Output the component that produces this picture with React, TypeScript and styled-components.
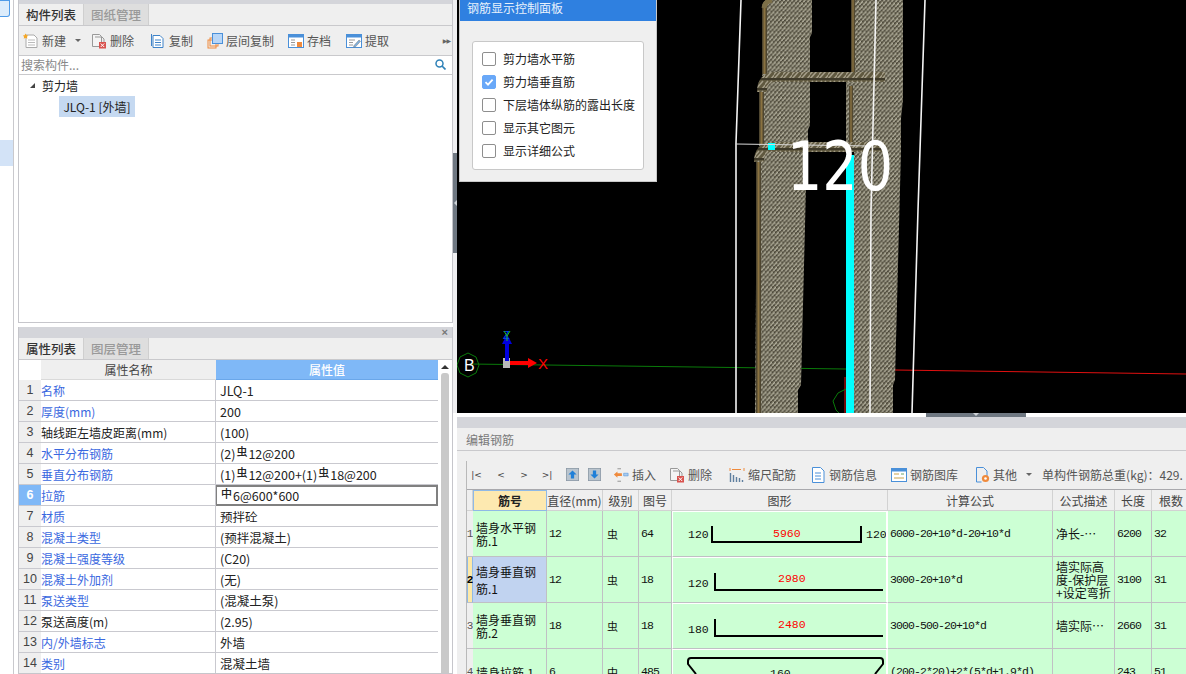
import React from "react";
import styled, { createGlobalStyle } from "styled-components";

const CJK = `"Noto Sans CJK SC", "Liberation Sans", sans-serif`;
const GRID_LATIN = `"Liberation Mono", "Noto Sans CJK SC", monospace`;

const Global = createGlobalStyle`
  html, body { margin: 0; padding: 0; background: #fff; }
  #root { width: 1186px; height: 674px; overflow: hidden; }
  * { box-sizing: border-box; }
`;

const Page = styled.div`
  width: 1186px; height: 674px; display: flex; overflow: hidden;
  font-family: ${CJK}; font-size: 12px; color: #222; background: #fff;
`;
const Rail = styled.div`
  width: 14px; flex: none; border-right: 1px solid #c9c9cd; display: flex; flex-direction: column;
`;
const RailIcon = styled.div`
  width: 10px; height: 17px; border: 1px solid #4f9be8; border-left: 0; border-radius: 0 0 3px 0; background: #dcecfb; flex: none;
`;
const RailSelected = styled.div`
  height: 26px; margin-top: 123px; background: #d3e3f7;
`;
const LeftColumn = styled.div`
  width: 435px; margin-left: 4px; flex: none; display: flex; flex-direction: column; gap: 4px;
`;
const Panel = styled.section<{ $h: number }>`
  height: ${p => p.$h}px; flex: none; display: flex; flex-direction: column; overflow: hidden;
  border: 1px solid #c6c6cb; border-top: 0; background: #fff;
`;
const TitleBar = styled.div<{ $h: number }>`
  height: ${p => p.$h}px; flex: none; background: #d4d5da; display: flex; justify-content: flex-end; align-items: center;
  padding-right: 4px; color: #777; font-size: 11px; line-height: 1; font-family: "Liberation Sans", sans-serif; font-weight: 700;
`;
const Tabs = styled.div`
  height: 22px; flex: none; display: flex; background: #efefef; border-bottom: 1px solid #c9c9cc;
`;
const Tab = styled.div<{ $on?: boolean }>`
  width: 65px; display: flex; align-items: center; justify-content: center; font-size: 12.5px; font-weight: 500;
  color: ${p => (p.$on ? "#333" : "#999")}; background: ${p => (p.$on ? "#efefef" : "#dedede")};
  border-right: 1px solid #cfcfcf;
`;
const Toolbar = styled.div`
  height: 30px; flex: none; display: flex; align-items: center; background: #efefef; border-bottom: 1px solid #c9c9cc;
  padding-left: 4px; color: #555; position: relative;
`;
const ToolItem = styled.div<{ $ml?: number }>`
  display: flex; align-items: center; gap: 3px; margin-left: ${p => p.$ml ?? 0}px; white-space: nowrap; font-size: 12px;
`;
const Caret = styled.span`
  width: 0; height: 0; border: 3px solid transparent; border-top: 3px solid #666; border-bottom: 0; margin-left: 6px;
`;
const More = styled.div`
  margin-left: auto; margin-right: 2px; color: #666; font-size: 6px; letter-spacing: -1px; font-family: "DejaVu Sans", sans-serif;
`;
const Search = styled.div`
  height: 19px; flex: none; display: flex; align-items: center; justify-content: space-between; padding: 0 6px 1px 2px;
  border-bottom: 1px solid #c9c9cc; color: #888; font-size: 12px;
`;
const Tree = styled.div`
  flex: 1; color: #222;
`;
const TreeRoot = styled.div`
  display: flex; align-items: center; height: 21px; padding-left: 11px; gap: 7px;
`;
const TreeArrow = styled.span`
  width: 0; height: 0; border-left: 5px solid transparent; border-bottom: 5px solid #444;
`;
const TreeLeaf = styled.div`
  margin-left: 40px; width: 76px; height: 21px; background: #c5d9f1; display: flex; align-items: center; justify-content: center;
  font-size: 12px; white-space: nowrap;
`;

const PropBody = styled.div`
  flex: 1; display: flex; min-height: 0; background: #fff;
`;
const PropGrid = styled.div`
  width: 419px; flex: none; display: grid; grid-template-columns: 22px 175px 222px; grid-template-rows: 20px; grid-auto-rows: 21px; align-content: start;
`;
const PropCorner = styled.div`
  background: #fff;
`;
const PropHead = styled.div<{ $on?: boolean }>`
  display: flex; align-items: center; justify-content: center; font-size: 12px;
  background: ${p => (p.$on ? "#7fb8f7" : "#efefef")}; color: ${p => (p.$on ? "#fff" : "#444")};
  border-bottom: 1px solid ${p => (p.$on ? "#6aa7ea" : "#d9d9d9")}; font-weight: ${p => (p.$on ? 500 : 400)};
`;
const RowNo = styled.div<{ $on?: boolean }>`
  display: flex; align-items: center; justify-content: center; font-size: 12.5px; font-family: "Liberation Sans", sans-serif;
  background: ${p => (p.$on ? "#7fb8f7" : "#efefef")}; color: ${p => (p.$on ? "#fff" : "#444")}; font-weight: ${p => (p.$on ? 700 : 400)};
  border-bottom: 1px solid #c9c9cf;
`;
const PropName = styled.div<{ $blue?: boolean }>`
  display: flex; align-items: center; font-size: 12px; white-space: nowrap; color: ${p => (p.$blue ? "#3a68e0" : "#222")};
  border-bottom: 1px solid #c9c9cf; border-right: 1px solid #c9c9cf;
`;
const PropValue = styled.div<{ $edit?: boolean }>`
  display: flex; align-items: center; padding-left: 4px; font-size: 12.5px; white-space: nowrap; color: #222;
  border-bottom: 1px solid #c9c9cf;
  ${p => p.$edit && `border: 2px solid #808080; border-left-width: 1px; padding-left: 3px;`}
`;
const Grade = styled.span`
  font-size: 11px; position: relative; top: -2px; margin: 0 1px; font-weight: 500; line-height: 1;
`;
const Scroll = styled.div`
  flex: 1; padding: 1px 3px 0 2px; display: flex; flex-direction: column; align-items: center; background: #fff;
`;
const ScrollUp = styled.span`
  width: 0; height: 0; border: 4px solid transparent; border-bottom: 4px solid #333; border-top: 0; margin: 4px 0;
`;
const ScrollThumb = styled.div`
  width: 8px; flex: 1; background: #c9c9c9; border-radius: 3px 3px 0 0;
`;

const Splitter = styled.div`
  width: 4px; flex: none; background: #efeff1; display: flex; flex-direction: column; justify-content: center; align-items: center; height: 413px;
`;
const SplitGrip = styled.div`
  width: 4px; height: 100px; background: #6f7882; margin-top: -7px; display: flex; align-items: center; justify-content: center;
`;
const GripArrow = styled.span`
  width: 0; height: 0; border: 3px solid transparent; border-right: 3px solid #cfd3d8; border-left: 0;
`;
const RightColumn = styled.div`
  width: 729px; flex: none; display: flex; flex-direction: column;
`;
const Viewport = styled.div`
  height: 413px; flex: none; background: #000; position: relative; overflow: hidden;
`;
const ViewSvg = styled.svg`
  display: block; width: 729px; height: 413px;
`;
const FloatPanel = styled.div`
  position: absolute; left: 2px; top: 0; width: 198px; height: 182px; background: #efefef; display: flex; flex-direction: column;
  border: 1px solid #c8c8c8; border-top: 0;
`;
const FloatHead = styled.div`
  height: 21px; flex: none; background: #2f80e0; color: #e8f1fc; padding-left: 7px; line-height: 15px; font-size: 12px;
`;
const FloatCard = styled.div`
  margin: 20px 12px 0 12px; height: 129px; background: #fff; border: 1px solid #c8c8c8; border-radius: 3px;
  padding: 5px 0 0 9px; display: flex; flex-direction: column;
`;
const CheckRow = styled.div`
  height: 23px; flex: none; display: flex; align-items: center; gap: 7px; color: #222; font-size: 12px; white-space: nowrap;
`;
const CheckBox = styled.span<{ $on?: boolean }>`
  width: 14px; height: 14px; flex: none; border-radius: 2px; display: flex; align-items: center; justify-content: center;
  border: 1px solid ${p => (p.$on ? "#69a8f8" : "#8e8e8e")}; background: ${p => (p.$on ? "#69a8f8" : "#fff")};
`;
const Gap = styled.div`
  height: 4px; flex: none; background: #fff; position: relative;
`;
const GapHandle = styled.div`
  position: absolute; left: 469px; top: 0; width: 100px; height: 4px; background: #6f7882; display: flex; justify-content: center;
`;
const GapArrow = styled.span`
  width: 0; height: 0; border: 3px solid transparent; border-top: 3px solid #cfd3d8; border-bottom: 0;
`;
const EditHead = styled.div`
  height: 23px; flex: none; background: #efefef; border-bottom: 1px solid #c9c9cc; padding-left: 9px; display: flex; align-items: center;
  color: #7a7a7a; font-size: 12px;
`;
const EditBody = styled.div`
  flex: 1; min-height: 0; background: #efefef; padding: 10px 0 0 9px; overflow: hidden;
`;
const EditInner = styled.div`
  border-left: 1px solid #b9b9b9; height: 100%; width: 800px;
`;
const EditBar = styled.div`
  height: 29px; display: flex; align-items: center; color: #555; font-size: 12px; white-space: nowrap; border-bottom: 1px solid #a9a9ad;
  padding-bottom: 1px;
`;
const Nav = styled.span<{ $w: number }>`
  width: ${p => p.$w}px; flex: none; font-family: "DejaVu Sans", sans-serif; font-size: 9px; color: #444; display: block; text-align: center;
`;
const Total = styled.span`
  margin-left: 10px; color: #555;
`;
const RebarGrid = styled.div`
  display: grid; grid-template-columns: 6px 74px 56px 36px 33px 216px 165px 62px 37px 39px; grid-template-rows: 21px 46px 46px 46px;
`;
const GridHead = styled.div<{ $on?: boolean }>`
  display: flex; align-items: center; justify-content: center; font-size: 12px; white-space: nowrap; color: #444;
  background: ${p => (p.$on ? "#fde9b0" : "#efefef")};
  border-right: 1px solid #d2d2d2; border-bottom: 1px solid #d2d2d2; overflow: hidden;
  ${p => p.$on && `font-weight: 700; color: #222; border: 1px solid #8fb9e6; border-left-color: #8fb9e6;`}
`;
const GridNo = styled.div<{ $on?: boolean }>`
  display: flex; align-items: center; justify-content: center; font-size: 11px; overflow: visible; font-family: ${GRID_LATIN};
  background: ${p => (p.$on ? "#fde9a8" : "#efefef")}; color: ${p => (p.$on ? "#000" : "#555")}; font-weight: ${p => (p.$on ? 700 : 400)};
  border-bottom: 1px solid #c0c0c4;
  ${p => p.$on && `border-left: 1px solid #8fb9e6; border-right: 1px solid #8fb9e6;`}
`;
const GridName = styled.div<{ $sel?: boolean }>`
  padding: 1px 0 0 3px; font-size: 12px; line-height: ${p => (p.$sel ? 17 : 13)}px; display: flex; align-items: center; color: #111;
  background: ${p => (p.$sel ? "#c1d3f0" : "#ccffd4")}; border-right: 1px solid #c0c0c4; border-bottom: 1px solid #c0c0c4;
  overflow: hidden; word-break: break-all;
`;
const GridCell = styled.div`
  padding-left: 2px; display: flex; align-items: center; background: #ccffd4; color: #111; white-space: nowrap;
  font-family: ${GRID_LATIN}; font-size: 11.5px; letter-spacing: -0.9px;
  border-right: 1px solid #c0c0c4; border-bottom: 1px solid #c0c0c4; overflow: hidden;
`;
const GridGrade = styled(GridCell)`
  padding-left: 4px; font-family: ${CJK}; font-size: 11px; letter-spacing: 0; font-weight: 400;
`;
const GridDesc = styled.div<{ $tight?: boolean }>`
  padding-left: 3px; display: flex; align-items: center; background: #ccffd4; color: #111; font-size: 12px;
  line-height: ${p => (p.$tight ? "13px" : "16px")};
  border-right: 1px solid #c0c0c4; border-bottom: 1px solid #c0c0c4; overflow: hidden;
`;
const ShapeCell = styled.div`
  background: #ccffd4; border: 1px solid #fff; border-right: 2px solid #fff; border-bottom: 1px solid #c0c0c4; overflow: hidden;
  box-shadow: 1px 0 0 #c0c0c4;
`;
const ShapeSvg = styled.svg`
  display: block; width: 213px; height: 44px; overflow: hidden;
`;
const ShapeText = styled.text<{ $red?: boolean }>`
  font-family: "Liberation Mono", monospace; font-size: 11.5px; fill: ${p => (p.$red ? "#f00" : "#111")};
`;

type ShapeProps = { left: string; mid: string; right?: string; ty: number; my: number; top: number; by: number; x1: number; mx: number };
const Shape = ({ left, mid, right, ty, my, top, by, x1, mx }: ShapeProps) => (
  <ShapeSvg viewBox="0 0 213 44">
    <ShapeText x={15} y={ty}>{left}</ShapeText>
    <path d={right ? `M${x1} ${top}V${by}H188V${top}` : `M${x1} ${top}V${by}H210`} fill="none" stroke="#000" strokeWidth="2" />
    <ShapeText $red x={mx} y={my}>{mid}</ShapeText>
    {right && <ShapeText x={193} y={ty}>{right}</ShapeText>}
  </ShapeSvg>
);

const Ico = styled.svg`
  width: 16px; height: 16px; flex: none; display: block;
`;
const ArrowIco = styled.svg`
  width: 13px; height: 13px; flex: none; display: block;
`;
const INew = () => (
  <Ico viewBox="0 0 16 16"><path d="M3 2h8l3 3v9.5H3z" fill="#fff" stroke="#aaa" /><path d="M5 7h7M5 9.5h7M5 12h7" stroke="#bbb" /><path d="M2.5 .5l1 1.7 1.8.3-1.3 1.3.3 1.9-1.8-.9-1.7.9.3-1.9L-.2 2.5l1.8-.3z" fill="#f5a623" /></Ico>
);
const IDel = () => (
  <Ico viewBox="0 0 16 16"><path d="M1.5 1.5h7l2 2v10h-9z" fill="#f4f4f4" stroke="#999" /><path d="M4 4h7l2 2v3" fill="none" stroke="#999" /><rect x="8" y="9" width="7" height="6.5" fill="#d9534f" /><path d="M9.7 10.5l3.5 3.5M13.2 10.5l-3.5 3.5" stroke="#fff" /></Ico>
);
const ICopy = () => (
  <Ico viewBox="0 0 16 16"><path d="M3 2.5h7l3 3v9H3z" fill="#fff" stroke="#3f83c9" /><path d="M1.5 1v12" stroke="#3f83c9" /><path d="M5 7h6M5 9.5h6M5 12h6" stroke="#3f83c9" /></Ico>
);
const ILayer = () => (
  <Ico viewBox="0 0 16 16"><rect x="1" y="7" width="8" height="8" fill="none" stroke="#ef8a3c" /><rect x="3" y="5" width="8" height="8" fill="none" stroke="#ef8a3c" /><rect x="5.5" y=".5" width="10" height="10" fill="#b8d6f7" stroke="#4a90d9" /></Ico>
);
const ISave = () => (
  <Ico viewBox="0 0 16 16"><rect x=".5" y="1.5" width="15" height="13" fill="#fff" stroke="#4a90d9" /><rect x=".5" y="1.5" width="15" height="3" fill="#4a90d9" /><path d="M3 7h4M3 9.5h4M3 12h4" stroke="#999" /><rect x="9" y="9" width="5" height="5" fill="#ef8a3c" /></Ico>
);
const IPick = () => (
  <Ico viewBox="0 0 16 16"><rect x=".5" y="1.5" width="15" height="13" fill="#fff" stroke="#4a90d9" /><rect x=".5" y="1.5" width="15" height="3" fill="#4a90d9" /><path d="M3 7h6M3 9.5h4M3 12h4" stroke="#999" /><path d="M8 12.5l5-5.5 1.5 1.3-5 5.5-2 .5z" fill="#7fb0dd" stroke="#777" strokeWidth=".5" /></Ico>
);
const IArrowBox = ({ down }: { down?: boolean }) => (
  <ArrowIco viewBox="0 0 16 16"><rect x=".5" y=".5" width="15" height="15" fill="#b9c4ce" stroke="#8b98a5" /><path d={down ? "M8 13L3 8h3V3h4v5h3z" : "M8 3l5 5h-3v5H6V8H3z"} fill="#1f7fd8" /></ArrowIco>
);
const IInsert = () => (
  <Ico viewBox="0 0 18 16"><path d="M5 1h4M5 15h4" stroke="#8b8b8b" /><path d="M12 6h5v3h-5z" fill="#a9cbee" stroke="#4a90d9" strokeWidth=".6" /><path d="M1 7.5L5 4v2h5v3H5v2z" fill="#ef8a3c" /></Ico>
);
const IScale = () => (
  <Ico viewBox="0 0 16 16"><path d="M1 1v3M15 1v3M3 2.5h9" stroke="#ef8a3c" /><path d="M1.5 6v9M4.5 8v7M7.5 10v5M10.5 11v4M13.5 13v2" stroke="#5f7f9f" strokeWidth="1.4" /></Ico>
);
const IInfo = () => (
  <Ico viewBox="0 0 16 16"><path d="M2.5 .5h8l3.5 3.5v11.5H2.5z" fill="#fff" stroke="#4a90d9" /><path d="M5 6h6M5 9h6M5 12h6" stroke="#4a90d9" /></Ico>
);
const ILib = () => (
  <Ico viewBox="0 0 16 16"><rect x=".5" y="1.5" width="15" height="13" fill="#fff" stroke="#4a90d9" /><rect x=".5" y="1.5" width="15" height="3" fill="#4a90d9" /><path d="M3 7h5M3 11h10" stroke="#c9a24a" /><path d="M10 7h3" stroke="#6aa56a" /></Ico>
);
const IOther = () => (
  <Ico viewBox="0 0 16 16"><path d="M2.5 .5h7L13 4v5" fill="none" stroke="#4a90d9" /><path d="M2.5 .5v14.5h5" fill="none" stroke="#4a90d9" /><circle cx="11.5" cy="11.5" r="3.6" fill="#ef8a3c" /><circle cx="11.5" cy="11.5" r="1.3" fill="#fff" /></Ico>
);
const ISearch = () => (
  <svg width="11" height="11" viewBox="0 0 11 11"><circle cx="4.5" cy="4.5" r="3.5" fill="none" stroke="#2f82b8" strokeWidth="1.5" /><path d="M7 7l3.5 3.5" stroke="#2f82b8" strokeWidth="1.7" /></svg>
);

const props: [string, boolean, React.ReactNode][] = [
  ["名称", true, "JLQ-1"],
  ["厚度(mm)", true, "200"],
  ["轴线距左墙皮距离(mm)", false, "(100)"],
  ["水平分布钢筋", true, <>(2)<Grade>虫</Grade>12@200</>],
  ["垂直分布钢筋", true, <>(1)<Grade>虫</Grade>12@200+(1)<Grade>虫</Grade>18@200</>],
  ["拉筋", true, <><Grade>中</Grade>6@600*600</>],
  ["材质", true, "预拌砼"],
  ["混凝土类型", true, "(预拌混凝土)"],
  ["混凝土强度等级", true, "(C20)"],
  ["混凝土外加剂", true, "(无)"],
  ["泵送类型", true, "(混凝土泵)"],
  ["泵送高度(m)", false, "(2.95)"],
  ["内/外墙标志", true, "外墙"],
  ["类别", true, "混凝土墙"],
];

const checks: [string, boolean][] = [
  ["剪力墙水平筋", false],
  ["剪力墙垂直筋", true],
  ["下层墙体纵筋的露出长度", false],
  ["显示其它图元", false],
  ["显示详细公式", false],
];

const Scene = () => (
  <ViewSvg viewBox="457 0 729 413">
    <defs>
      <pattern id="mesh" width="4" height="5" patternUnits="userSpaceOnUse" patternTransform="rotate(3)">
        <rect width="4" height="5" fill="#77735f" />
        <path d="M0 3L2 1M2 5.5L4 3.5" stroke="#b9b6a6" strokeWidth="1.1" />
        <path d="M2 2L4 .5M0 5L2 3.7" stroke="#37332a" strokeWidth="1" />
      </pattern>
      <pattern id="twist" width="9" height="10" patternUnits="userSpaceOnUse">
        <rect width="9" height="10" fill="#5f583f" />
        <path d="M0 9L7 1M5 10L12 2M-4 9L3 1" stroke="#a49d88" strokeWidth="1.5" />
        <rect y="8" width="9" height="2" fill="#3f3a2a" />
      </pattern>
      <linearGradient id="rib" x1="0" x2="1" y1="0" y2="0">
        <stop offset="0" stopColor="#3f3a2b" />
        <stop offset=".5" stopColor="#8a7240" />
        <stop offset="1" stopColor="#3f3a2b" />
      </linearGradient>
    </defs>
    <path d="M470 364L846 369" stroke="#0a7a0a" strokeWidth="1" />
    <path d="M895 370L1186 374" stroke="#e01010" strokeWidth="1" />
    <path d="M845 377V413" stroke="#e01010" />
    <path d="M846 389l-8 4-5 8 3 9 3 3" fill="none" stroke="#0a7a0a" />
    <path d="M762 6Q763 0 768 0H812V33L810 37V76H762Z" fill="url(#mesh)" />
    <path d="M759 92Q760 78 770 78H810V125L808 130V146H759Z" fill="url(#mesh)" />
    <path d="M757 155Q759 146 770 146H807L801 385L798 390V413H755Z" fill="url(#mesh)" />
    <path d="M852 0H903V72H885V82H846V72H852Z" fill="url(#mesh)" />
    <path d="M903 70V100L901 118V150L895 380L893 385V413H854V150H846V80H885V70Z" fill="url(#mesh)" />
    <rect x="762" y="4" width="5" height="70" fill="url(#rib)" />
    <rect x="851" y="0" width="4" height="72" fill="url(#rib)" />
    <rect x="849" y="86" width="4" height="56" fill="url(#rib)" />
    <rect x="759" y="90" width="5" height="54" fill="url(#rib)" />
    <rect x="756" y="160" width="5" height="253" fill="url(#rib)" />
    <path d="M764 8Q765 1 772 0" fill="none" stroke="#7c6f48" strokeWidth="5" />
    <path d="M762 92Q762 77 775 77H885" fill="none" stroke="url(#twist)" strokeWidth="10" />
    <path d="M759 162Q759 147 772 147H885" fill="none" stroke="url(#twist)" strokeWidth="10" />
    <rect x="846" y="155" width="8" height="258" fill="#00ffff" />
    <rect x="768" y="143" width="7" height="7" fill="#00ffff" />
    <path d="M741 0L736 143V413M876 0L871 210L870 413M925 0L918 210L912 413" fill="none" stroke="#f4f4f4" strokeWidth="1.6" />
    <path d="M736 144L870 146" stroke="#d8d8d8" strokeWidth="1" />
    <text x="787" y="190" fontFamily="DejaVu Sans, sans-serif" fontSize="68" fill="#fff" textLength="106" lengthAdjust="spacingAndGlyphs">120</text>
    <path d="M468 353l8 4 3 8-3 8-8 4-8-4-3-8 3-8z" fill="none" stroke="#0a7a0a" />
    <text x="464" y="371" fontFamily="Liberation Sans, sans-serif" fontSize="16" fill="#fff">B</text>
    <rect x="503" y="358" width="7" height="10" fill="#b8b8b8" />
    <path d="M510 361h18v-3l9 5-9 5v-3h-18z" fill="#f00" />
    <path d="M505 361V344h-3l5-10 5 10h-3v17z" fill="#0000e0" />
    <text x="503" y="339" fontFamily="Liberation Sans, sans-serif" fontSize="11" fill="#0044ff">Z</text>
    <path d="M504 331l3 5 3-5M507 336v5" stroke="#20c020" fill="none" />
    <text x="538" y="369" fontFamily="Liberation Sans, sans-serif" fontSize="15" fill="#f00">X</text>
  </ViewSvg>
);

export default function App() {
  return (
    <Page>
      <Global />
      <Rail>
        <RailIcon />
        <RailSelected />
      </Rail>
      <LeftColumn>
        <Panel $h={323}>
          <TitleBar $h={4} />
          <Tabs>
            <Tab $on>构件列表</Tab>
            <Tab>图纸管理</Tab>
          </Tabs>
          <Toolbar>
            <ToolItem><INew />新建<Caret /></ToolItem>
            <ToolItem $ml={10}><IDel />删除</ToolItem>
            <ToolItem $ml={16}><ICopy />复制</ToolItem>
            <ToolItem $ml={14}><ILayer />层间复制</ToolItem>
            <ToolItem $ml={14}><ISave />存档</ToolItem>
            <ToolItem $ml={15}><IPick />提取</ToolItem>
            <More>▶▶</More>
          </Toolbar>
          <Search>搜索构件...<ISearch /></Search>
          <Tree>
            <TreeRoot><TreeArrow />剪力墙</TreeRoot>
            <TreeLeaf>JLQ-1 [外墙]</TreeLeaf>
          </Tree>
        </Panel>
        <Panel $h={347}>
          <TitleBar $h={11}>×</TitleBar>
          <Tabs>
            <Tab $on>属性列表</Tab>
            <Tab>图层管理</Tab>
          </Tabs>
          <PropBody>
            <PropGrid>
              <PropCorner />
              <PropHead>属性名称</PropHead>
              <PropHead $on>属性值</PropHead>
              {props.map(([name, blue, value], i) => (
                <React.Fragment key={name}>
                  <RowNo $on={i === 5}>{i + 1}</RowNo>
                  <PropName $blue={blue}>{name}</PropName>
                  <PropValue $edit={i === 5}>{value}</PropValue>
                </React.Fragment>
              ))}
            </PropGrid>
            <Scroll>
              <ScrollUp />
              <ScrollThumb />
            </Scroll>
          </PropBody>
        </Panel>
      </LeftColumn>
      <Splitter>
        <SplitGrip><GripArrow /></SplitGrip>
      </Splitter>
      <RightColumn>
        <Viewport>
          <Scene />
          <FloatPanel>
            <FloatHead>钢筋显示控制面板</FloatHead>
            <FloatCard>
              {checks.map(([label, on]) => (
                <CheckRow key={label}>
                  <CheckBox $on={on}>
                    {on && (
                      <svg width="10" height="10" viewBox="0 0 10 10"><path d="M1.5 5.2L4 7.6 8.6 2.6" fill="none" stroke="#fff" strokeWidth="1.8" /></svg>
                    )}
                  </CheckBox>
                  {label}
                </CheckRow>
              ))}
            </FloatCard>
          </FloatPanel>
        </Viewport>
        <Gap><GapHandle><GapArrow /></GapHandle></Gap>
        <TitleBar $h={11} />
        <EditHead>编辑钢筋</EditHead>
        <EditBody>
          <EditInner>
            <EditBar>
              <Nav $w={19}>|&lt;</Nav>
              <Nav $w={30}>&lt;</Nav>
              <Nav $w={16}>&gt;</Nav>
              <Nav $w={30}>&gt;|</Nav>
              <ToolItem $ml={4}><IArrowBox /></ToolItem>
              <ToolItem $ml={9}><IArrowBox down /></ToolItem>
              <ToolItem $ml={12}><IInsert />插入</ToolItem>
              <ToolItem $ml={13}><IDel />删除</ToolItem>
              <ToolItem $ml={17}><IScale />缩尺配筋</ToolItem>
              <ToolItem $ml={14}><IInfo />钢筋信息</ToolItem>
              <ToolItem $ml={14}><ILib />钢筋图库</ToolItem>
              <ToolItem $ml={16}><IOther />其他<Caret /></ToolItem>
              <Total>单构件钢筋总重(kg)：429.</Total>
            </EditBar>
            <RebarGrid>
              <GridHead />
              <GridHead $on>筋号</GridHead>
              <GridHead>直径(mm)</GridHead>
              <GridHead>级别</GridHead>
              <GridHead>图号</GridHead>
              <GridHead>图形</GridHead>
              <GridHead>计算公式</GridHead>
              <GridHead>公式描述</GridHead>
              <GridHead>长度</GridHead>
              <GridHead>根数</GridHead>

              <GridNo>1</GridNo>
              <GridName>墙身水平钢筋.1</GridName>
              <GridCell>12</GridCell>
              <GridGrade>虫</GridGrade>
              <GridCell>64</GridCell>
              <ShapeCell><Shape left="120" mid="5960" right="120" ty={26} my={25} top={14} by={30} x1={39} mx={100} /></ShapeCell>
              <GridCell>6000-20+10*d-20+10*d</GridCell>
              <GridDesc>净长-⋯</GridDesc>
              <GridCell>6200</GridCell>
              <GridCell>32</GridCell>

              <GridNo $on>2</GridNo>
              <GridName $sel>墙身垂直钢筋.1</GridName>
              <GridCell>12</GridCell>
              <GridGrade>虫</GridGrade>
              <GridCell>18</GridCell>
              <ShapeCell><Shape left="120" mid="2980" ty={29} my={24} top={15} by={32} x1={42} mx={105} /></ShapeCell>
              <GridCell>3000-20+10*d</GridCell>
              <GridDesc $tight>墙实际高度-保护层+设定弯折</GridDesc>
              <GridCell>3100</GridCell>
              <GridCell>31</GridCell>

              <GridNo>3</GridNo>
              <GridName>墙身垂直钢筋.2</GridName>
              <GridCell>18</GridCell>
              <GridGrade>虫</GridGrade>
              <GridCell>18</GridCell>
              <ShapeCell><Shape left="180" mid="2480" ty={29} my={24} top={15} by={32} x1={42} mx={105} /></ShapeCell>
              <GridCell>3000-500-20+10*d</GridCell>
              <GridDesc>墙实际⋯</GridDesc>
              <GridCell>2660</GridCell>
              <GridCell>31</GridCell>

              <GridNo>4</GridNo>
              <GridName>墙身拉筋.1</GridName>
              <GridCell>6</GridCell>
              <GridGrade>中</GridGrade>
              <GridCell>485</GridCell>
              <ShapeCell>
                <ShapeSvg viewBox="0 0 213 44">
                  <path d="M23 24L15 14V11Q15 8 18 8H207Q210 8 210 11V14L202 24" fill="none" stroke="#000" strokeWidth="2" />
                  <ShapeText x={97} y={27}>160</ShapeText>
                </ShapeSvg>
              </ShapeCell>
              <GridCell>(200-2*20)+2*(5*d+1.9*d)</GridCell>
              <GridDesc />
              <GridCell>243</GridCell>
              <GridCell>51</GridCell>
            </RebarGrid>
          </EditInner>
        </EditBody>
      </RightColumn>
    </Page>
  );
}
